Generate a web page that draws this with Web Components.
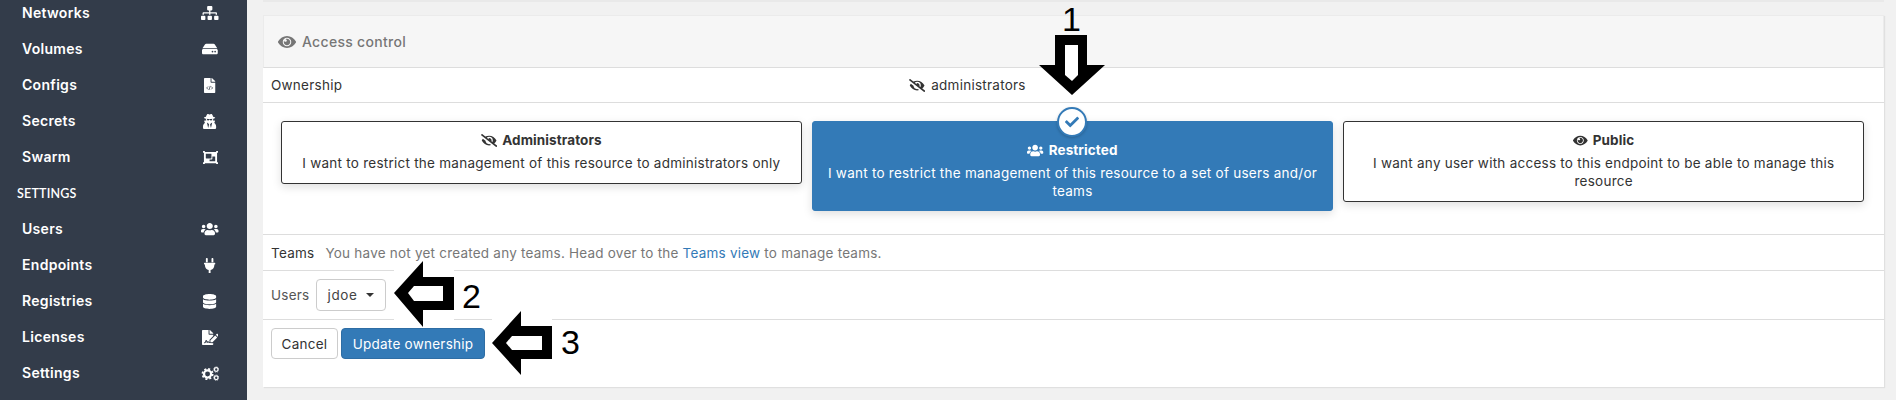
<!DOCTYPE html>
<html lang="en"><head><meta charset="utf-8"><title>Access control</title>
<style>
html,body{margin:0;height:400px;overflow:hidden;background:#f1f1f1;}
body{font:13.5px Inter,"Noto Sans",sans-serif;color:#333;}
</style></head><body>
<app-shell>
  <side-bar slot="side">
    <nav-item icon="sitemap">Networks</nav-item>
    <nav-item icon="hdd">Volumes</nav-item>
    <nav-item icon="filecode">Configs</nav-item>
    <nav-item icon="secret">Secrets</nav-item>
    <nav-item icon="group">Swarm</nav-item>
    <nav-heading>SETTINGS</nav-heading>
    <nav-item icon="users">Users</nav-item>
    <nav-item icon="plug">Endpoints</nav-item>
    <nav-item icon="database">Registries</nav-item>
    <nav-item icon="signature">Licenses</nav-item>
    <nav-item icon="cogs">Settings</nav-item>
  </side-bar>
  <access-widget>
    <ui-icon slot="title-icon" name="eye" size="16"></ui-icon>
    <span slot="title">Access control</span>

    <form-row slot="ownership" style="height:34px">
      <owner-line></owner-line>
    </form-row>

    <box-selector slot="boxes">
      <select-card icon="eyeslash" heading="Administrators">I want to restrict the management of this resource to administrators only</select-card>
      <select-card icon="users" heading="Restricted" selected>I want to restrict the management of this resource to a set of users and/or teams</select-card>
      <select-card icon="eye" heading="Public">I want any user with access to this endpoint to be able to manage this resource</select-card>
    </box-selector>

    <teams-row slot="teams"></teams-row>
    <users-row slot="users"></users-row>
    <action-bar slot="actions"></action-bar>
  </access-widget>

  <note-arrow dir="down" n="1" slot="notes" style="left:1039px;top:35px"></note-arrow>
  <note-arrow dir="left" n="2" slot="notes" style="left:394px;top:261px"></note-arrow>
  <note-arrow dir="left" n="3" slot="notes" style="left:492px;top:311px"></note-arrow>
  <note-num slot="notes" style="left:1062px;top:0">1</note-num>
  <note-num slot="notes" style="left:462px;top:277px">2</note-num>
  <note-num slot="notes" style="left:561px;top:323px">3</note-num>
</app-shell>

<script>
const ICONS={
 sitemap:[640,512,'<path d="M128 352H32c-17.67 0-32 14.33-32 32v96c0 17.67 14.33 32 32 32h96c17.67 0 32-14.33 32-32v-96c0-17.67-14.33-32-32-32zm-24-80h192v48h48v-48h192v48h48v-57.59c0-21.17-17.23-38.41-38.41-38.41H344v-64h40c17.67 0 32-14.33 32-32V32c0-17.67-14.33-32-32-32H256c-17.67 0-32 14.33-32 32v96c0 17.67 14.33 32 32 32h40v64H94.41C73.23 224 56 241.23 56 262.41V320h48v-48zm264 80h-96c-17.67 0-32 14.33-32 32v96c0 17.67 14.33 32 32 32h96c17.67 0 32-14.33 32-32v-96c0-17.67-14.33-32-32-32zm240 0h-96c-17.67 0-32 14.33-32 32v96c0 17.67 14.33 32 32 32h96c17.67 0 32-14.33 32-32v-96c0-17.67-14.33-32-32-32z"/>'],
 hdd:[576,512,'<path d="M576 304v96c0 26.51-21.49 48-48 48H48c-26.51 0-48-21.49-48-48v-96c0-26.51 21.49-48 48-48h480c26.51 0 48 21.49 48 48zm-48-80a79.557 79.557 0 0 1 30.777 6.165L462.25 85.374A48.003 48.003 0 0 0 422.311 64H153.689a48 48 0 0 0-39.938 21.374L17.223 230.165A79.557 79.557 0 0 1 48 224h480zm-48 96c-17.673 0-32 14.327-32 32s14.327 32 32 32 32-14.327 32-32-14.327-32-32-32zm-96 0c-17.673 0-32 14.327-32 32s14.327 32 32 32 32-14.327 32-32-14.327-32-32-32z"/>'],
 filecode:[384,512,'<path d="M224 136V0H24C10.7 0 0 10.7 0 24v464c0 13.3 10.7 24 24 24h336c13.3 0 24-10.7 24-24V160H248c-13.2 0-24-10.8-24-24z"/><path d="M384 121.9v6.1H256V0h6.1c6.4 0 12.5 2.5 17 7l97.9 98c4.5 4.5 7 10.6 7 16.9z"/><path d="M140 290l-50 50 50 50M244 290l50 50-50 50M214 270l-44 140" fill="none" stroke="#333c4a" stroke-width="26"/>'],
 secret:[448,512,'<path d="M383.9 308.3l23.9-62.6c4-10.5-3.7-21.7-15-21.7h-58.5c11-18.9 17.8-40.6 17.8-64v-.3c39.2-7.8 64-19.1 64-31.7 0-13.3-27.3-25.1-70.1-33-9.2-32.8-27-65.8-40.6-82.8-9.5-11.9-25.9-15.6-39.5-8.8l-27.6 13.8c-9 4.5-19.6 4.5-28.6 0L182.1 3.4c-13.6-6.8-30-3.1-39.5 8.8-13.5 17-31.4 50-40.6 82.8-42.7 7.9-70 19.7-70 33 0 12.6 24.8 23.9 64 31.7v.3c0 23.4 6.8 45.1 17.8 64H56.3c-11.5 0-19.2 11.7-14.7 22.3l25.8 60.2C27.3 329.8 0 372.7 0 422.4v44.8C0 491.9 20.1 512 44.8 512h358.4c24.7 0 44.8-20.1 44.8-44.8v-44.8c0-48.4-25.8-90.4-64.1-114.1zM176 480l-41.6-192 49.6 32 24 40-32 120zm96 0l-32-120 24-40 49.6-32L272 480zm41.7-298.5c-3.9 11.9-7 24.6-16.5 33.4-10.1 9.3-48 22.4-64-25-2.8-8.4-15.4-8.4-18.3 0-17 50.2-56 32.4-64 25-9.5-8.8-12.7-21.5-16.5-33.4-.8-2.5-6.3-5.7-6.3-5.8v-10.8c28.3 3.6 61 5.8 96 5.8s67.7-2.1 96-5.8v10.8c-.1.1-5.6 3.2-6.4 5.8z"/>'],
 group:[512,512,'<path d="M480 128V96h20c6.627 0 12-5.373 12-12V44c0-6.627-5.373-12-12-12h-40c-6.627 0-12 5.373-12 12v20H64V44c0-6.627-5.373-12-12-12H12C5.373 32 0 37.373 0 44v40c0 6.627 5.373 12 12 12h20v320H12c-6.627 0-12 5.373-12 12v40c0 6.627 5.373 12 12 12h40c6.627 0 12-5.373 12-12v-20h384v20c0 6.627 5.373 12 12 12h40c6.627 0 12-5.373 12-12v-40c0-6.627-5.373-12-12-12h-20V128zM96 276V140c0-6.627 5.373-12 12-12h168c6.627 0 12 5.373 12 12v136c0 6.627-5.373 12-12 12H108c-6.627 0-12-5.373-12-12zm320 96c0 6.627-5.373 12-12 12H236c-6.627 0-12-5.373-12-12v-52h72c13.255 0 24-10.745 24-24v-72h84c6.627 0 12 5.373 12 12v136z"/>'],
 users:[640,512,'<path d="M96 224c35.3 0 64-28.7 64-64s-28.7-64-64-64-64 28.7-64 64 28.7 64 64 64zm448 0c35.3 0 64-28.7 64-64s-28.7-64-64-64-64 28.7-64 64 28.7 64 64 64zm32 32h-64c-17.6 0-33.5 7.1-45.1 18.6 40.3 22.1 68.9 62 75.1 109.4h66c17.7 0 32-14.3 32-32v-32c0-35.3-28.7-64-64-64zm-256 0c61.9 0 112-50.1 112-112S381.9 32 320 32 208 82.1 208 144s50.1 112 112 112zm76.8 32h-8.3c-20.8 10-43.9 16-68.5 16s-47.6-6-68.5-16h-8.3C179.6 288 128 339.6 128 403.2V432c0 26.5 21.5 48 48 48h288c26.5 0 48-21.5 48-48v-28.8c0-63.6-51.6-115.2-115.2-115.2zm-223.7-13.4C161.5 263.1 145.6 256 128 256H64c-35.3 0-64 28.7-64 64v32c0 17.7 14.3 32 32 32h65.9c6.3-47.4 34.9-87.3 75.2-109.4z"/>'],
 plug:[384,512,'<path d="M256 144V32c0-17.673 14.327-32 32-32s32 14.327 32 32v112h-64zm112 16H16c-8.837 0-16 7.163-16 16v32c0 8.837 7.163 16 16 16h16v32c0 77.406 54.969 141.971 128 156.796V512h64v-99.204c73.031-14.825 128-79.39 128-156.796v-32h16c8.837 0 16-7.163 16-16v-32c0-8.837-7.163-16-16-16zM128 144V32c0-17.673-14.327-32-32-32S64 14.327 64 32v112h64z"/>'],
 database:[448,512,'<path d="M448 73.143v45.714C448 159.143 347.667 192 224 192S0 159.143 0 118.857V73.143C0 32.857 100.333 0 224 0s224 32.857 224 73.143zM448 176v102.857C448 319.143 347.667 352 224 352S0 319.143 0 278.857V176c48.125 33.143 136.208 48.572 224 48.572S399.874 209.143 448 176zm0 160v102.857C448 479.143 347.667 512 224 512S0 479.143 0 438.857V336c48.125 33.143 136.208 48.572 224 48.572S399.874 369.143 448 336z"/>'],
 signature:[576,512,'<path d="M218.17 424.14c-2.95-5.92-8.09-6.52-10.17-6.52s-7.22.59-10.02 6.19l-7.67 15.34c-6.37 12.78-25.03 11.37-29.48-2.09L144 386.59l-10.61 31.88c-5.89 17.66-22.38 29.53-41 29.53H80c-8.84 0-16-7.16-16-16s7.16-16 16-16h12.39c4.83 0 9.11-3.08 10.64-7.66l18.19-54.64c3.3-9.81 12.44-16.41 22.78-16.41s19.48 6.59 22.77 16.41l13.88 41.64c19.75-16.19 54.06-9.7 66 14.16 1.89 3.78 5.49 5.95 9.36 6.26v-82.12l128-127.09V160H248c-13.2 0-24-10.8-24-24V0H24C10.7 0 0 10.7 0 24v464c0 13.3 10.7 24 24 24h336c13.3 0 24-10.7 24-24v-40l-128-.11c-16.12-.31-30.58-9.28-37.83-23.75zM384 121.9c0-6.3-2.5-12.4-7-16.9L279.1 7c-4.5-4.5-10.6-7-17-7H256v128h128v-6.1zm-96 225.06V416h68.99l161.68-162.78-67.88-67.88L288 346.96zm280.54-179.63l-31.87-31.87c-9.94-9.94-26.07-9.94-36.01 0l-27.25 27.25 67.88 67.88 27.25-27.25c9.95-9.94 9.95-26.07 0-36.01z"/>'],
 cogs:[640,512,'<circle cx="224" cy="272" r="122" fill="none" stroke="currentColor" stroke-width="76"/><circle cx="224" cy="272" r="176" fill="none" stroke="currentColor" stroke-width="56" stroke-dasharray="70 68.2"/><g fill="none" stroke="currentColor"><circle cx="520" cy="120" r="62" stroke-width="44"/><circle cx="520" cy="120" r="92" stroke-width="30" stroke-dasharray="30 42.3"/><circle cx="520" cy="400" r="62" stroke-width="44"/><circle cx="520" cy="400" r="92" stroke-width="30" stroke-dasharray="30 42.3"/></g>'],
 eye:[576,512,'<path d="M569.354 231.631C512.97 135.949 407.81 64 288 64 168.14 64 63.004 135.994 6.646 231.631a47.999 47.999 0 0 0 0 48.739C63.031 376.051 168.19 448 288 448c119.86 0 224.996-71.994 281.354-167.631a47.997 47.997 0 0 0 0-48.738zM288 392c-75.162 0-136-60.827-136-136 0-75.162 60.826-136 136-136 75.162 0 136 60.826 136 136 0 75.162-60.826 136-136 136zm104-136c0 57.438-46.562 104-104 104s-104-46.562-104-104c0-17.708 4.431-34.379 12.236-48.973l-.001.032c0 23.651 19.173 42.823 42.824 42.823s42.824-19.173 42.824-42.823c0-23.651-19.173-42.824-42.824-42.824l-.032.001C253.621 156.431 270.292 152 288 152c57.438 0 104 46.562 104 104z"/>'],
 eyeslash:[640,512,'<path d="M320 400c-75.85 0-137.25-58.71-142.9-133.11L72.2 185.82c-13.79 17.3-26.48 35.59-36.72 55.59a32.35 32.35 0 0 0 0 29.19C89.71 376.41 197.07 448 320 448c26.91 0 52.87-4 77.89-10.46L346 397.39a144.13 144.13 0 0 1-26 2.61zm313.82 58.1l-110.55-85.44a331.25 331.25 0 0 0 81.25-102.07 32.35 32.35 0 0 0 0-29.19C550.29 135.59 442.93 64 320 64a308.15 308.15 0 0 0-147.32 37.7L45.46 3.37A16 16 0 0 0 23 6.18L3.37 31.45A16 16 0 0 0 6.18 53.9l588.36 454.73a16 16 0 0 0 22.46-2.81l19.64-25.27a16 16 0 0 0-2.82-22.45zm-183.72-142l-39.3-30.38A94.75 94.75 0 0 0 416 256a94.76 94.76 0 0 0-121.31-92.21A47.65 47.65 0 0 1 304 192a46.64 46.64 0 0 1-1.54 10l-73.61-56.89A142.31 142.31 0 0 1 320 112a143.92 143.92 0 0 1 144 144c0 21.63-5.29 41.79-13.9 60.11z"/>'],
 check:[512,512,'<path d="M173.898 439.404l-166.4-166.4c-9.997-9.997-9.997-26.206 0-36.204l36.203-36.204c9.997-9.998 26.207-9.998 36.204 0L192 312.69 432.095 72.596c9.997-9.997 26.207-9.997 36.204 0l36.203 36.204c9.997 9.997 9.997 26.206 0 36.204l-294.4 294.401c-9.998 9.997-26.207 9.997-36.204-.001z"/>']
};
const FONT='Inter,"Noto Sans",sans-serif';
const BODY=`font:13.5px ${FONT};letter-spacing:.25px;`;
function def(tag,html){
  customElements.define(tag,class extends HTMLElement{
    constructor(){super();this.attachShadow({mode:'open'}).innerHTML=html;}
  });
}
customElements.define('ui-icon',class extends HTMLElement{
  constructor(){super();this.attachShadow({mode:'open'});}
  connectedCallback(){
    const [w,h,p]=ICONS[this.getAttribute('name')];const s=+(this.getAttribute('size')||14);
    const W=s*w/h;
    this.shadowRoot.innerHTML=`<style>:host{display:inline-flex;align-items:center;justify-content:center;line-height:0;vertical-align:-2px}svg{display:block;fill:currentColor}</style><svg xmlns="http://www.w3.org/2000/svg" width="${W}" height="${s}" viewBox="0 0 ${w} ${h}">${p}</svg>`;
  }
});
def('app-shell',`<style>
:host{display:flex;height:400px;position:relative;overflow:hidden;${BODY}color:#333}
.main{flex:1;min-width:0;padding:0 12px 0 16px;display:flex;flex-direction:column}
.strip{height:2px;background:#e9e9e9;flex:none;margin-bottom:13px}
</style><slot name="side"></slot><div class="main"><div class="strip"></div><slot></slot></div><slot name="notes"></slot>`);
def('side-bar',`<style>
:host{display:flex;flex-direction:column;flex:none;width:247px;height:400px;background:#333c4a;color:#fff;overflow:hidden;box-sizing:border-box}
.list{margin-top:-6px}
</style><div class="list"><slot></slot></div>`);
customElements.define('nav-item',class extends HTMLElement{
  constructor(){super();this.attachShadow({mode:'open'});}
  connectedCallback(){
    const n=this.getAttribute('icon');
    this.shadowRoot.innerHTML=`<style>
:host{display:flex;height:36px;align-items:center;padding-left:22px;font:600 14px ${FONT};letter-spacing:.3px;color:#fff}
.t{flex:1}.i{width:20px;margin-right:27px;display:flex;justify-content:center;position:relative;top:1px}
</style><span class="t"><slot></slot></span><span class="i"><ui-icon name="${n}" size="${n==='sitemap'||n==='users'||n==='hdd'?14:15}"></ui-icon></span>`;
  }
});
def('nav-heading',`<style>:host{display:flex;height:34px;padding-top:2px;align-items:center;padding-left:17px;font:600 12.5px Lato,${FONT};color:#fff;letter-spacing:.2px}</style><slot></slot>`);
def('access-widget',`<style>
:host{display:block;background:#fff;height:372px;box-shadow:1px 1px 1px #e0e0e0}
.head{height:53px;box-sizing:border-box;background:#f6f6f6;border:1px solid #ebebeb;border-bottom:1px solid #ddd;display:flex;align-items:center;gap:6px;padding-left:14px;color:#767676;font-size:14px;font-weight:500;letter-spacing:.3px}
::slotted([slot=ownership]){border-bottom:1px solid #ddd}
</style>
<div class="head"><slot name="title-icon"></slot><slot name="title"></slot></div>
<slot name="ownership"></slot><slot name="boxes"></slot><slot name="teams"></slot><slot name="users"></slot><slot name="actions"></slot>`);
def('form-row',`<style>:host{display:flex;align-items:center;padding-left:8px}</style><slot></slot>`);
def('owner-line',`<style>:host{display:grid;grid-template-columns:638px 1fr;width:100%;align-items:center}
.v{display:flex;align-items:center;gap:6px}</style><span>Ownership</span><span class="v"><ui-icon name="eyeslash" size="13"></ui-icon>administrators</span>`);
def('box-selector',`<style>:host{display:grid;grid-template-columns:repeat(3,1fr);gap:10.5px;align-items:start;padding:18px 20px 0 18px;height:132px;box-sizing:border-box;border-bottom:1px solid #ddd}</style><slot></slot>`);
customElements.define('select-card',class extends HTMLElement{
  constructor(){super();this.attachShadow({mode:'open'});}
  connectedCallback(){
    const sel=this.hasAttribute('selected');
    this.shadowRoot.innerHTML=`<style>
:host{display:block;position:relative;box-sizing:border-box;border:1px solid ${sel?'#337ab7':'#333'};border-radius:3px;background:${sel?'#337ab7':'#fff'};color:${sel?'#fff':'#333'};text-align:center;padding:${sel?'19px 14px 10px':'9px 14px 11px'};box-shadow:0 3px 10px rgba(0,0,0,.13);line-height:18px}
.h{font-weight:700;margin-bottom:5px;display:flex;justify-content:center;align-items:center;gap:5px;height:18px;letter-spacing:.1px}
.c{position:absolute;left:50%;top:-15px;transform:translateX(-50%);width:26px;height:26px;border:2px solid #337ab7;border-radius:50%;background:#fff;color:#337ab7;display:flex;align-items:center;justify-content:center;box-shadow:0 1px 3px rgba(0,0,0,.2)}
</style>${sel?'<span class="c"><ui-icon name="check" size="14"></ui-icon></span>':''}<div class="h"><ui-icon name="${this.getAttribute('icon')}" size="13"></ui-icon><span>${this.getAttribute('heading')}</span></div><div><slot></slot></div>`;
  }
});
def('teams-row',`<style>:host{display:flex;align-items:center;height:35px;padding-left:8px;border-bottom:1px solid #ddd;gap:11px}
.m{color:#777;letter-spacing:.22px}a{color:#337ab7;text-decoration:none}</style><span>Teams</span><span class="m">You have not yet created any teams. Head over to the <a href="#">Teams view</a> to manage teams.</span>`);
def('users-row',`<style>:host{display:flex;align-items:center;height:48px;padding-left:8px;border-bottom:1px solid #ddd;gap:6px;color:#555}
.s{display:flex;align-items:center;box-sizing:border-box;width:70px;height:32px;border:1px solid #ccc;border-radius:4px;padding:0 11px;justify-content:space-between;color:#444;letter-spacing:.6px}
.c{width:0;height:0;border:4px solid transparent;border-top-color:#333;border-bottom:0}</style><span>Users</span><span class="s">jdoe<span class="c"></span></span>`);
def('action-bar',`<style>:host{display:flex;gap:3px;padding:8px 0 0 8px}
button{${BODY}height:31px;border-radius:4px;box-sizing:border-box;padding:0;cursor:pointer}
.a{width:67px;background:#fff;border:1px solid #ccc;color:#333}
.b{width:144px;background:#337ab7;border:1px solid #2e6da4;color:#fff}</style><button class="a">Cancel</button><button class="b">Update ownership</button>`);
customElements.define('note-arrow',class extends HTMLElement{
  constructor(){super();this.attachShadow({mode:'open'});}
  connectedCallback(){
    const d=this.getAttribute('dir');const n=this.getAttribute('n');
    const svg=d==='down'
     ?`<svg width="66" height="60" viewBox="0 0 66 60"><path d="M16 0H48V30H66L33 60 0 30H16Z" fill="#000"/><path d="M26 10H39V40L33 46 26 40Z" fill="#fff"/></svg>`
     :n==='2'
     ?`<svg width="60" height="66" viewBox="0 0 60 66" style="background:#fff"><path d="M0 32 29 0V16H60V49H29V66Z" fill="#000"/><path d="M14 32 20 25H49V40H20Z" fill="#fff"/></svg>`
     :`<svg width="60" height="64" viewBox="0 0 60 64" style="background:#fff"><path d="M0 32 29 0V15H60V48H29V64Z" fill="#000"/><path d="M14 32 20 25H50V39H20Z" fill="#fff"/></svg>`;
    this.shadowRoot.innerHTML=`<style>:host{position:absolute;display:block;line-height:0}svg{display:block}</style>${svg}`;
  }
});
def('note-num',`<style>:host{position:absolute;display:block;font:34px "Liberation Sans",sans-serif;color:#000;line-height:39px}</style><slot></slot>`);
</script>
</body></html>
